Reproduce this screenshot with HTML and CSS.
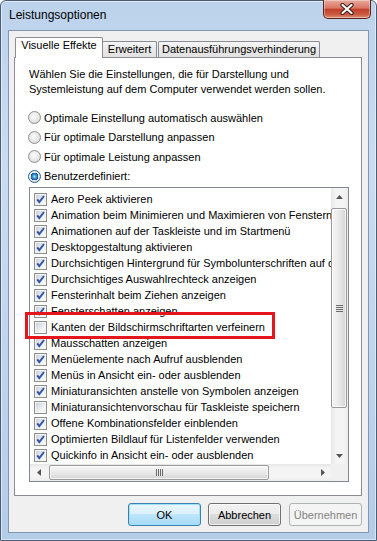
FILE: index.html
```html
<!DOCTYPE html>
<html lang="de">
<head>
    <meta charset="UTF-8">
    <title>Leistungsoptionen</title>
    <link rel="stylesheet" href="styles.css">
</head>
<body>
    <div class="window">
        <div class="titlebar">
            <span class="title">Leistungsoptionen</span>
            <div class="close">
                <svg width="14" height="12" viewBox="0 0 14 12">
                    <path d="M2.5 2 L11.5 10 M11.5 2 L2.5 10" stroke="#3a1d19" stroke-width="4.2" stroke-linecap="round"/>
                    <path d="M2.5 2 L11.5 10 M11.5 2 L2.5 10" stroke="#fff" stroke-width="2.2" stroke-linecap="round"/>
                </svg>
            </div>
        </div>

        <div class="client">
            <div class="tabs">
                <div class="tab active">Visuelle Effekte</div>
                <div class="tab tab-erweitert">Erweitert</div>
                <div class="tab tab-dep">Datenausführungsverhinderung</div>
            </div>

            <div class="panel">
                <p class="intro">Wählen Sie die Einstellungen, die für Darstellung und<br>Systemleistung auf dem Computer verwendet werden sollen.</p>

                <div class="radios">
                    <div class="radio-row"><span class="radio"></span>Optimale Einstellung automatisch auswählen</div>
                    <div class="radio-row"><span class="radio"></span>Für optimale Darstellung anpassen</div>
                    <div class="radio-row"><span class="radio"></span>Für optimale Leistung anpassen</div>
                    <div class="radio-row"><span class="radio checked"></span>Benutzerdefiniert:</div>
                </div>

                <div class="list">
                    <div class="list-main">
                        <div class="list-view">
                            <div class="item"><span class="check on"></span>Aero Peek aktivieren</div>
                            <div class="item"><span class="check on"></span>Animation beim Minimieren und Maximieren von Fenstern</div>
                            <div class="item"><span class="check on"></span>Animationen auf der Taskleiste und im Startmenü</div>
                            <div class="item"><span class="check on"></span>Desktopgestaltung aktivieren</div>
                            <div class="item"><span class="check on"></span>Durchsichtigen Hintergrund für Symbolunterschriften auf dem Desktop</div>
                            <div class="item"><span class="check on"></span>Durchsichtiges Auswahlrechteck anzeigen</div>
                            <div class="item"><span class="check on"></span>Fensterinhalt beim Ziehen anzeigen</div>
                            <div class="item"><span class="check on"></span>Fensterschatten anzeigen</div>
                            <div class="item"><span class="check"></span>Kanten der Bildschirmschriftarten verfeinern</div>
                            <div class="item"><span class="check on"></span>Mausschatten anzeigen</div>
                            <div class="item"><span class="check on"></span>Menüelemente nach Aufruf ausblenden</div>
                            <div class="item"><span class="check on"></span>Menüs in Ansicht ein- oder ausblenden</div>
                            <div class="item"><span class="check on"></span>Miniaturansichten anstelle von Symbolen anzeigen</div>
                            <div class="item"><span class="check"></span>Miniaturansichtenvorschau für Taskleiste speichern</div>
                            <div class="item"><span class="check on"></span>Offene Kombinationsfelder einblenden</div>
                            <div class="item"><span class="check on"></span>Optimierten Bildlauf für Listenfelder verwenden</div>
                            <div class="item"><span class="check on"></span>Quickinfo in Ansicht ein- oder ausblenden</div>
                        </div>
                        <div class="vscroll">
                            <div class="sb-btn">
                                <svg width="7" height="4" viewBox="0 0 7 4"><path d="M0 4 L3.5 0 L7 4 Z" fill="#555"/></svg>
                            </div>
                            <div class="vthumb">
                                <svg width="7" height="7" viewBox="0 0 7 7"><path d="M0 0.5 H7 M0 2.5 H7 M0 4.5 H7 M0 6.5 H7" stroke="#6b6b6b" stroke-width="1"/></svg>
                            </div>
                            <div class="spacer"></div>
                            <div class="sb-btn">
                                <svg width="7" height="4" viewBox="0 0 7 4"><path d="M0 0 L7 0 L3.5 4 Z" fill="#555"/></svg>
                            </div>
                        </div>
                    </div>
                    <div class="hscroll-row">
                        <div class="hscroll">
                            <div class="sb-btn">
                                <svg width="4" height="7" viewBox="0 0 4 7"><path d="M4 0 L4 7 L0 3.5 Z" fill="#555"/></svg>
                            </div>
                            <div class="hthumb">
                                <svg width="7" height="7" viewBox="0 0 7 7"><path d="M0.5 0 V7 M2.5 0 V7 M4.5 0 V7 M6.5 0 V7" stroke="#6b6b6b" stroke-width="1"/></svg>
                            </div>
                            <div class="spacer"></div>
                            <div class="sb-btn">
                                <svg width="4" height="7" viewBox="0 0 4 7"><path d="M0 0 L4 3.5 L0 7 Z" fill="#555"/></svg>
                            </div>
                        </div>
                        <div class="corner"></div>
                    </div>
                </div>

                <div class="highlight"></div>
            </div>

            <div class="buttons">
                <button class="btn btn-ok">OK</button>
                <button class="btn btn-cancel">Abbrechen</button>
                <button class="btn btn-disabled">Übernehmen</button>
            </div>
        </div>
    </div>
</body>
</html>
```

FILE: styles.css
```css
* {
    box-sizing: border-box;
}

body {
    margin: 0;
    font-family: "Liberation Sans", Arial, sans-serif;
    font-size: 11px;
    color: #000;
    background: #fff;
}

/* window frame */
.window {
    width: 377px;
    height: 541px;
    border: 1px solid #4b5d74;
    border-radius: 6px 6px 0 0;
    background: linear-gradient(#bcd3ec, #c9dcf1 30%, #bed4ed 70%, #b3cce8);
    box-shadow: inset 0 0 0 1px rgba(255, 255, 255, 0.5);
    padding: 0 7px 7px;
    display: flex;
    flex-direction: column;
}

.titlebar {
    height: 29px;
    display: flex;
    justify-content: space-between;
    align-items: flex-start;
}

.title {
    margin: 7px 0 0 1px;
    font-size: 12px;
    line-height: 15px;
}

.close {
    width: 48px;
    height: 19px;
    margin: -1px -2px 0 0;
    border: 1px solid #5a2520;
    border-top: none;
    border-radius: 0 0 5px 5px;
    background: linear-gradient(#e8aa9d, #d87463 45%, #c4412c 52%, #cc5840 80%, #e0957d);
    box-shadow: inset 0 0 0 1px rgba(255, 255, 255, 0.35);
    display: flex;
    align-items: center;
    justify-content: center;
}

.client {
    flex: 1;
    border: 1px solid #8497b0;
    background: #f0f0f0;
    padding: 6px 6px 6px 5px;
    display: flex;
    flex-direction: column;
}

/* tabs */
.tabs {
    height: 20px;
    display: flex;
    align-items: flex-end;
    padding-left: 1px;
}

.tab {
    height: 16px;
    line-height: 15px;
    border: 1px solid #898c95;
    border-bottom: none;
    border-radius: 2px 2px 0 0;
    background: linear-gradient(#f6f6f6, #e9e9e9 50%, #e1e1e1);
    text-align: center;
    white-space: nowrap;
}

.tab.active {
    width: 88px;
    height: 21px;
    margin-bottom: -1px;
    background: #fff;
    position: relative;
    z-index: 1;
}

.tab-erweitert {
    width: 55px;
    margin-left: -1px;
}

.tab-dep {
    width: 162px;
    margin-left: 1px;
}

.panel {
    height: 439px;
    border: 1px solid #898c95;
    background: #fff;
    padding: 9px 12px 0 14px;
    position: relative;
}

.intro {
    margin: 0;
    line-height: 15px;
}

/* radio buttons */
.radios {
    margin: 11px 0 0 -1px;
    display: flex;
    flex-direction: column;
}

.radio-row {
    height: 19.5px;
    display: flex;
    align-items: center;
    gap: 3px;
}

.radio {
    width: 13px;
    height: 13px;
    border: 1px solid #8e8f8f;
    border-radius: 50%;
    background: radial-gradient(circle at 45% 40%, #fdfdfd, #e6e6e6 55%, #c9c9c9);
}

.radio.checked {
    border-color: #2c628b;
    background:
        radial-gradient(circle, #a8e3fb 0, #4aa6e0 1.6px, #1f6db0 3px, #174e86 3.6px, transparent 4px),
        radial-gradient(circle at 45% 40%, #fdfdfd, #e6e6e6 55%, #c9c9c9);
}

/* list box */
.list {
    width: 320px;
    height: 295px;
    margin-top: 1px;
    border: 1px solid #828790;
    background: #fff;
    display: flex;
    flex-direction: column;
}

.list-main {
    height: 276px;
    display: flex;
}

.list-view {
    width: 301px;
    overflow: hidden;
    padding: 3px 0 0 4px;
}

.item {
    height: 16px;
    display: flex;
    align-items: center;
    gap: 4px;
    white-space: nowrap;
}

.check {
    flex: none;
    width: 13px;
    height: 13px;
    border: 1px solid #8e8f8f;
    background: linear-gradient(135deg, #c6cbd2, #eef0f2 60%, #f8f8f8);
    box-shadow: inset 0 0 0 1px #f4f4f4;
}

.check.on {
    background-image:
        url("data:image/svg+xml,%3Csvg xmlns='http://www.w3.org/2000/svg' width='11' height='11'%3E%3Cpath d='M2.2 5.4 L4.3 8.2 L9 2' fill='none' stroke='%233654a6' stroke-width='2'/%3E%3C/svg%3E"),
        linear-gradient(135deg, #c6cbd2, #eef0f2 60%, #f8f8f8);
}

/* scroll bars */
.vscroll {
    width: 17px;
    display: flex;
    flex-direction: column;
    background: linear-gradient(to right, #e6e6e6, #f4f4f4 25%, #f4f4f4 75%, #ececec);
}

.sb-btn {
    width: 17px;
    height: 17px;
    flex: none;
    display: flex;
    align-items: center;
    justify-content: center;
}

.vthumb {
    height: 200px;
    margin: 3px 1px 0 0;
    border: 1px solid #9a9a9a;
    border-radius: 2px;
    background: linear-gradient(to right, #f6f6f6, #e9e9e9 50%, #d4d4d4);
    box-shadow: inset 0 0 0 1px rgba(255, 255, 255, 0.7);
    display: flex;
    align-items: center;
    justify-content: center;
}

.spacer {
    flex: 1;
}

.hscroll-row {
    height: 17px;
    display: flex;
}

.hscroll {
    width: 301px;
    display: flex;
    background: linear-gradient(#e6e6e6, #f4f4f4 25%, #f4f4f4 75%, #ececec);
}

.hthumb {
    width: 220px;
    margin: 1px 0 1px 2px;
    border: 1px solid #9a9a9a;
    border-radius: 2px;
    background: linear-gradient(#f6f6f6, #e9e9e9 50%, #d4d4d4);
    box-shadow: inset 0 0 0 1px rgba(255, 255, 255, 0.7);
    display: flex;
    align-items: center;
    justify-content: center;
}

.corner {
    width: 17px;
    background: #f0f0f0;
}

/* annotation frame drawn over the list */
.highlight {
    position: absolute;
    left: 10px;
    top: 254px;
    width: 250px;
    height: 27px;
    border: 3px solid #e5151c;
}

/* dialog buttons */
.buttons {
    display: flex;
    justify-content: flex-end;
    margin-top: 7px;
}

.btn {
    width: 73px;
    height: 23px;
    padding: 0;
    border: 1px solid #707070;
    border-radius: 3px;
    background: linear-gradient(#f2f2f2, #ebebeb 50%, #dddddd 50%, #cfcfcf);
    box-shadow: inset 0 0 0 1px rgba(255, 255, 255, 0.7);
    font: inherit;
    color: #000;
}

.btn-ok {
    margin-right: 7px;
    border-color: #3c7fb1;
    background: linear-gradient(#eaf6fd, #d9f0fc 50%, #bee6fd 50%, #a7d9f5);
    box-shadow: inset 0 0 0 1px #9fe0fb;
}

.btn-cancel {
    margin-right: 8px;
}

.btn-disabled {
    border-color: #adb2b5;
    background: #f4f4f4;
    box-shadow: none;
    color: #838383;
}
```
